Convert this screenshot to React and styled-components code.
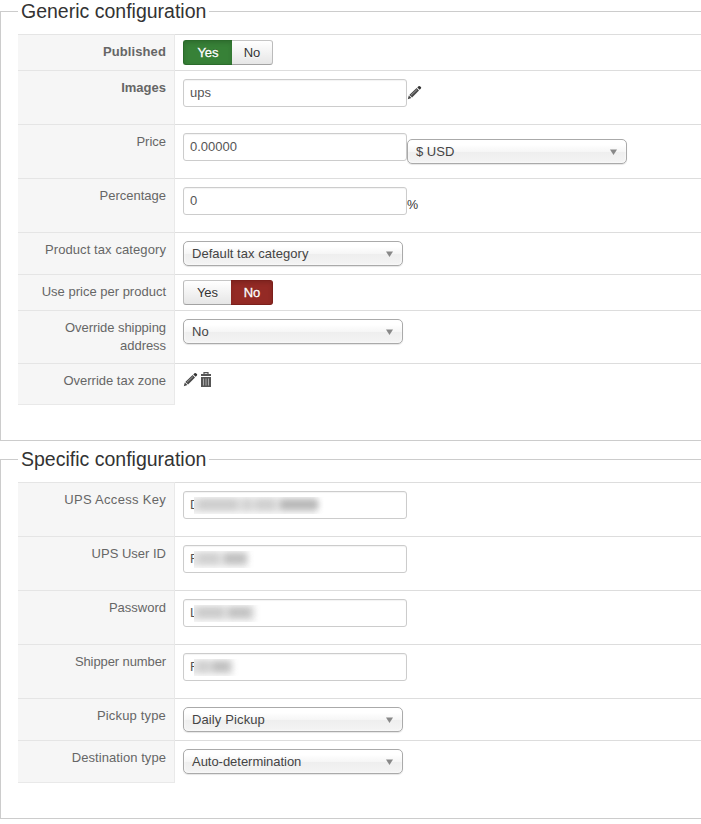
import styled, { createGlobalStyle, css } from "styled-components";

const GlobalStyle = createGlobalStyle`
  * {
    box-sizing: border-box;
  }

  body {
    margin: 0;
    background: #fff;
    color: #333;
    font-family: "Liberation Sans", Arial, sans-serif;
    font-size: 13px;
    line-height: 18px;
    overflow: hidden;
  }
`;

const Page = styled.main`
  width: 720px;
`;

const Fieldset = styled.fieldset`
  height: ${({ $height }) => $height}px;
  margin: 0 0 7px;
  padding: 11px 0 0 17px;
  border: 1px solid #ccc;
`;

const Legend = styled.legend`
  width: 191px;
  height: 23px;
  padding: 0 3px;
  font-size: 19.5px;
  line-height: 23px;
  white-space: nowrap;
`;

const Row = styled.div`
  display: grid;
  grid-template-columns: 157px 1fr;
  height: ${({ $height }) => $height}px;
`;

const Key = styled.label`
  padding: 8px 8px 0 20px;
  background: #f6f6f6;
  border-top: 1px solid #e5e5e5;
  border-right: 1px solid #e9e9e9;
  color: #666;
  font-weight: ${({ $bold }) => ($bold ? 700 : 400)};
  letter-spacing: ${({ $spacing }) => $spacing || 0}px;
  text-align: right;

  ${Row}:last-child > & {
    border-bottom: 1px solid #e9e9e9;
  }
`;

const Value = styled.div`
  display: flex;
  align-items: flex-start;
  padding: ${({ $tight }) => ($tight ? 5 : 8)}px 0 0 8px;
  border-top: 1px solid #ddd;
`;

const Input = styled.div`
  display: flex;
  width: 224px;
  height: 28px;
  padding: 4px 6px;
  border: 1px solid #ccc;
  border-radius: 3px;
  box-shadow: inset 0 1px 1px rgba(0, 0, 0, 0.05);
  color: #555;
  white-space: nowrap;
`;

/* covers everything after the left edge of the first letter */
const Smudge = styled.div`
  position: relative;
  width: ${({ $width }) => $width}px;
  height: 17px;
  margin: 1px 0 0 ${({ $pull }) => -$pull}px;
  overflow: hidden;
  background: #fff;

  svg {
    display: block;
  }
`;

const Soft = styled.g`
  filter: blur(3px);
`;

const Select = styled.div`
  display: flex;
  align-items: center;
  justify-content: space-between;
  width: 220px;
  height: 25px;
  margin-top: ${({ $offset }) => $offset || 0}px;
  padding: 0 9px 0 8px;
  border: 1px solid #aaa;
  border-radius: 5px;
  background: linear-gradient(#fff 20%, #f6f6f6 50%, #eee 52%, #f4f4f4 100%);
  box-shadow: inset 0 0 3px #fff, 0 1px 1px rgba(0, 0, 0, 0.1);
  color: #444;
  letter-spacing: ${({ $spacing }) => $spacing || 0}px;
`;

const Arrow = styled.svg`
  display: block;
  width: 7px;
  height: 6px;
  fill: #888;
`;

const Toggle = styled.div`
  display: flex;
  height: 25px;
`;

const ToggleButton = styled.button`
  width: ${({ $width }) => $width}px;
  padding: 0;
  border: 1px solid #bbb;
  border-color: #c5c5c5 #bbb #a2a2a2;
  background: linear-gradient(#fff, #e6e6e6);
  color: #333;
  font: inherit;
  text-shadow: 0 1px 1px rgba(255, 255, 255, 0.75);

  &:first-child {
    border-right: 0;
    border-radius: 3px 0 0 3px;
  }

  &:last-child {
    border-left: 0;
    border-radius: 0 3px 3px 0;
  }

  ${({ $tone }) =>
    $tone &&
    css`
      padding-left: ${$tone === "red" ? 1 : 0}px;
      border-color: ${$tone === "green" ? "#2b6b2b" : "#7b1f1b"};
      background: ${$tone === "green" ? "#378137" : "#942a25"};
      box-shadow: inset 0 2px 4px rgba(0, 0, 0, 0.15);
      color: #fff;
      text-shadow: 0 -1px 0 rgba(0, 0, 0, 0.25);
      -webkit-text-stroke: 0.3px #fff;
    `}
`;

const Icon = styled.svg`
  flex: none;
  margin-top: ${({ $top }) => $top || 0}px;
`;

const Suffix = styled.span`
  margin-top: 9px;
  font-size: 12.5px;
`;

const Pencil = ({ top }) => (
  <Icon $top={top} width="16" height="15" viewBox="0 0 16 15">
    <path d="M.8 14.2 1.8 10.6 4.4 13.1Z" fill="#444" />
    <path d="M2.3 9.9 9.6 3.1 12 5.5 5.1 12.5Z" fill="#484848" />
    <path d="M3.9 10.3 10 4.6" stroke="#a5a5a5" strokeWidth=".9" />
    <path d="m10.3 2.4 1.2-1.2q.7-.6 1.4 0l1 .9q.7.7 0 1.4l-1.2 1.3Z" fill="#333" />
  </Icon>
);

const Trash = ({ top }) => (
  <Icon $top={top} width="14" height="16" viewBox="0 0 14 16">
    <path d="M5 2V.6h4V2" fill="none" stroke="#555" strokeWidth="1.2" />
    <path d="M2 2h10v2H2zM2 5h10v10H2z" fill="#555" />
    <path d="M4.5 6.5v7M7 6.5v7M9.5 6.5v7" stroke="#aaa" />
  </Icon>
);

const YesNo = ({ value }) => (
  <Toggle>
    <ToggleButton $width={value ? 49 : 48} $tone={value ? "green" : null}>
      Yes
    </ToggleButton>
    <ToggleButton $width={value ? 41 : 42} $tone={value ? null : "red"}>
      No
    </ToggleButton>
  </Toggle>
);

const Dropdown = ({ children, offset, spacing }) => (
  <Select $offset={offset} $spacing={spacing}>
    {children}
    <Arrow viewBox="0 0 7 6">
      <path d="M0 .5h7L3.5 6Z" />
    </Arrow>
  </Select>
);

const MaskedInput = ({ first, pull, width, spots }) => (
  <Input>
    {first}
    <Smudge $pull={pull} $width={width + 6}>
      <svg width={width + 6} height="17">
        <Soft>
          <rect x="-10" y="0" width={width + 9} height="16" fill="#e4e4e4" />
        </Soft>
        <Soft>
          {spots.map(([x, w, fill]) => (
            <rect key={x} x={x} y="3" width={w} height="9" rx="3" fill={fill} />
          ))}
        </Soft>
      </svg>
    </Smudge>
  </Input>
);

const Field = ({ label, height, bold, tight, spacing, children }) => (
  <Row $height={height}>
    <Key $bold={bold} $spacing={spacing}>
      {label}
    </Key>
    <Value $tight={tight}>{children}</Value>
  </Row>
);

const App = () => (
  <>
    <GlobalStyle />
    <Page>
      <Fieldset $height={441}>
        <Legend>Generic configuration</Legend>
        <Field label="Published" height={36} bold tight spacing={0.1}>
          <YesNo value />
        </Field>
        <Field label="Images" height={54} bold>
          <Input>ups</Input>
          <Pencil top={6} />
        </Field>
        <Field label="Price" height={54}>
          <Input>0.00000</Input>
          <Dropdown offset={6}>$ USD</Dropdown>
        </Field>
        <Field label="Percentage" height={54}>
          <Input>0</Input>
          <Suffix>%</Suffix>
        </Field>
        <Field label="Product tax category" height={42} spacing={0.09}>
          <Dropdown spacing={0.04}>Default tax category</Dropdown>
        </Field>
        <Field label="Use price per product" height={36} tight>
          <YesNo value={false} />
        </Field>
        <Field label="Override shipping address" height={53} spacing={-0.05}>
          <Dropdown>No</Dropdown>
        </Field>
        <Field label="Override tax zone" height={42}>
          <Pencil />
          <Trash />
        </Field>
      </Fieldset>

      <Fieldset $height={371}>
        <Legend>Specific configuration</Legend>
        <Field label="UPS Access Key" height={54} spacing={0.3}>
          <MaskedInput
            first="D"
            pull={5}
            width={124}
            spots={[
              [4, 40, "#cbcbcb"],
              [48, 10, "#d0d0d0"],
              [61, 20, "#cecece"],
              [86, 38, "#b4b4b4"],
            ]}
          />
        </Field>
        <Field label="UPS User ID" height={54}>
          <MaskedInput
            first="F"
            pull={4}
            width={55}
            spots={[
              [4, 21, "#cecece"],
              [30, 22, "#bdbdbd"],
            ]}
          />
        </Field>
        <Field label="Password" height={54}>
          <MaskedInput
            first="L"
            pull={3}
            width={62}
            spots={[
              [3, 27, "#c9c9c9"],
              [34, 23, "#c0c0c0"],
            ]}
          />
        </Field>
        <Field label="Shipper number" height={54} spacing={-0.1}>
          <MaskedInput
            first="F"
            pull={4}
            width={40}
            spots={[
              [3, 13, "#cdcdcd"],
              [18, 18, "#bdbdbd"],
            ]}
          />
        </Field>
        <Field label="Pickup type" height={42} spacing={0.17}>
          <Dropdown spacing={0.12}>Daily Pickup</Dropdown>
        </Field>
        <Field label="Destination type" height={43} spacing={0.06}>
          <Dropdown spacing={-0.03}>Auto-determination</Dropdown>
        </Field>
      </Fieldset>
    </Page>
  </>
);

export default App;
